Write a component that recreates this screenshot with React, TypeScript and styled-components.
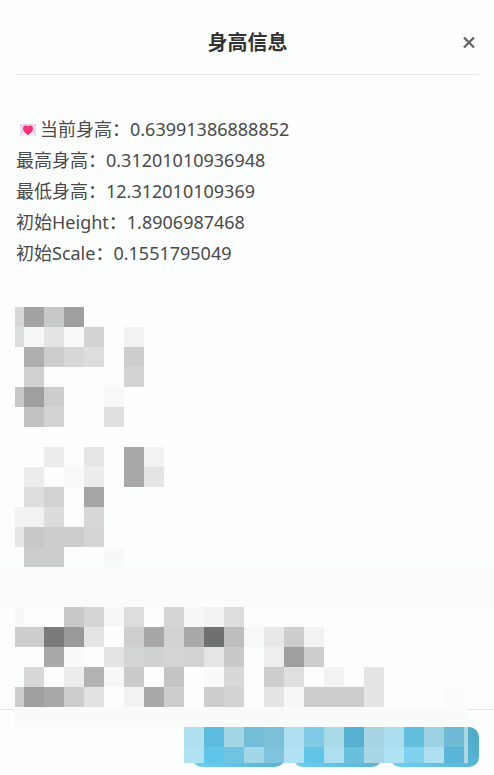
import { useState } from "react";
import styled, { createGlobalStyle } from "styled-components";

const info = [
  { label: "当前身高", value: "0.63991386888852", marked: true },
  { label: "最高身高", value: "0.31201010936948" },
  { label: "最低身高", value: "12.312010109369" },
  { label: "初始Height", value: "1.8906987468" },
  { label: "初始Scale", value: "0.1551795049" },
];

// one hex colour per cell, "-" leaves the cell empty
const upperBlocks = [
  "d7d7d7 a3a3a3 c7c9c8 9da09e",
  "dcdedd f6f8f7 e4e4e4 f8faf9 d2d4d3 - f1f3f2",
  "- adafae cccecd d8d7d8 dcdedd - cccecd",
  "- cfd1d0 - - - - d2d4d3",
  "c8cac9 9da09e cccecd - - f8faf9",
  "- c0c2c1 d2d4d3 - - dedfde",
  "-",
  "- - ebedec - e5e7e6 - a9a9a9 f1f3f2",
  "- ebedec - f8faf9 ebedec - a9a9a9 e3e5e4",
  "- dcdedd d1d3d2 - a5a7a6",
  "f1f3f2 f1f3f2 dbdddc - d8d7d8",
  "e5e7e6 c7c9c8 cccecd cccecd d4d6d5",
  "- cccecd cccecd - - f7f9f8",
];

const lowerBlocks = [
  "f6f8f7 - - c8cac9 d4d6d5 f6f8f7 dcdedd - d4d6d5 f6f8f7 f1f3f2 dcdedd",
  "cccecd cccecd 7a7a7a 979a98 e3e5e4 - d0cfd0 a7a7a7 d3d2d3 a9a9a9 6e716f bdbfbe f8faf9 e9e8e9 cccecd f1f3f2",
  "- - a9a9a9 f9fbfa - e3e5e4 d3d5d4 d0d2d1 d5d4d5 d3d3d3 e6e5e6 c8cac9 - eeeeee 9da09e cccecd",
  "- d9d8d9 - ebedec b2b4b3 f6f8f7 cccbcc - c4c6c5 - f9fbfa d9d8d9 - cccecd e0dfe0 - f1f3f2 - e3e5e4",
  "cccecd 9da09e a9a9a9 cccecd e1e3e2 - f1f3f2 a9a9a9 cccecd - cccecd d1d3d2 - e3e5e4 f6f8f7 cccecd cccecd cccecd e3e5e4 - - - fcfbfc",
];

const buttonBlocks = [
  "b0e0f0 5ebddf a3d7e6 74bdd6 7cc0d8 b0dff1 80cce7 a8dae8 56b0cf a6d4e2 acdeee 62bfdd 9dd2e4 6fbbd5 acd8e4",
  "b0e2f2 60c5e8 6fc4e3 a2d7e7 7fc3dc b0e2f4 62c5e8 addff0 69bfdc aad7e5 b0e2f3 80d1ee b0dff1 5ab6d9 acd8e4",
];

const Cells = ({ rows, size }: { rows: string[]; size: number }) => (
  <>
    {rows.flatMap((row, y) => {
      const cells = row.split(" ");
      return Array.from({ length: size }, (_, x) => {
        const color = cells[x];
        return (
          <Cell
            key={`${y}-${x}`}
            $color={color && color !== "-" ? `#${color}` : "transparent"}
          />
        );
      });
    })}
  </>
);

const LoveLetter = () => (
  <Letter viewBox="0 0 16 12" aria-hidden="true">
    <rect width="16" height="12" fill="#ead9f3" />
    <path d="M0 12L6 6h4l6 6z" fill="#f3e8f8" />
    <path d="M0 0l8 8 8-8z" fill="#e4cdef" />
    <path
      d="M8 11C5 8.700 3 7 3 4.400C3 2.600 4.200 1.400 5.700 1.400C6.700 1.400 7.600 1.900 8 2.700C8.400 1.900 9.300 1.400 10.300 1.400C11.800 1.400 13 2.600 13 4.400C13 7 11 8.700 8 11z"
      fill="#f4326f"
    />
  </Letter>
);

const App = () => {
  const [open, setOpen] = useState(true);

  return (
    <>
      <GlobalStyle />
      {open && (
        <Dialog role="dialog" aria-labelledby="height-title">
          <Header>
            <Title id="height-title">身高信息</Title>
            <CloseButton aria-label="关闭" onClick={() => setOpen(false)}>
              <CloseIcon viewBox="0 0 12 12" aria-hidden="true">
                <path d="M1 0.500l10 10M11 0.500L1 10.500" />
              </CloseIcon>
            </CloseButton>
          </Header>
          <Content>
            <InfoList>
              {info.map(({ label, value, marked }) => (
                <InfoRow key={label}>
                  {marked && <LoveLetter />}
                  {label}：{value}
                </InfoRow>
              ))}
            </InfoList>
            <TextMosaic aria-hidden="true">
              <Cells rows={upperBlocks} size={23} />
            </TextMosaic>
            <Band />
            <TextMosaic aria-hidden="true">
              <Cells rows={lowerBlocks} size={23} />
            </TextMosaic>
          </Content>
          <Footer>
            <ActionButton $wide aria-label="操作一" />
            <ActionButton aria-label="操作二" />
            <ActionButton aria-label="操作三" />
            <FooterCover aria-hidden="true">
              <Veil />
              <ButtonMosaic>
                <Cells rows={buttonBlocks} size={15} />
              </ButtonMosaic>
            </FooterCover>
          </Footer>
        </Dialog>
      )}
    </>
  );
};

export default App;

const GlobalStyle = createGlobalStyle`
  * {
    box-sizing: border-box;
  }
  body {
    margin: 0;
    background: #fcfefd;
    color: #4a4a4a;
    font-family: "Noto Sans", "Noto Sans CJK SC", sans-serif;
  }
`;

const Dialog = styled.section`
  display: flex;
  flex-direction: column;
  min-height: 100vh;
`;

const Header = styled.header`
  display: grid;
  grid-template-columns: 20px 1fr 20px;
  align-items: center;
  margin: 0 15px 0 16px;
  padding: 27px 0 16px;
  border-bottom: 1px solid #e7e9e8;
`;

const Title = styled.h1`
  grid-column: 2;
  margin: 0;
  font-size: 20px;
  font-weight: 700;
  line-height: 31px;
  text-align: center;
  color: #333;
`;

const CloseButton = styled.button`
  display: flex;
  align-items: center;
  justify-content: center;
  width: 20px;
  height: 20px;
  padding: 0;
  border: none;
  background: none;
  color: #666;
  cursor: pointer;
`;

const CloseIcon = styled.svg`
  width: 12px;
  height: 12px;
  fill: none;
  stroke: currentColor;
  stroke-width: 2.4;
`;

const Content = styled.main`
  flex: 1;
  padding-bottom: 2px;
`;

const InfoList = styled.ul`
  margin: 0;
  padding: 39px 16px 38px;
  list-style: none;
`;

const InfoRow = styled.li`
  display: flex;
  align-items: center;
  font-size: 18px;
  line-height: 31px;
`;

const Letter = styled.svg`
  width: 16px;
  height: 12px;
  margin: 0 4px;
`;

const Cell = styled.span<{ $color: string }>`
  background: ${({ $color }) => $color};
`;

const TextMosaic = styled.div`
  display: grid;
  grid-template-columns: 9px repeat(22, 20px);
  grid-auto-rows: 20px;
  margin-left: 15px;
`;

const Band = styled.div`
  height: 40px;
  background: #fcfbfc;
`;

const Footer = styled.footer`
  position: relative;
  display: flex;
  justify-content: flex-end;
  gap: 8px;
  padding: 17px 15px 8px;
  border-top: 1px solid #e7e9e8;
`;

const ActionButton = styled.button<{ $wide?: boolean }>`
  width: ${({ $wide }) => ($wide ? 93 : 89)}px;
  height: 40px;
  border: none;
  border-radius: 10px;
  background: linear-gradient(45deg, #6dcff6, #4fa8c5);
  cursor: pointer;
`;

// sits over the divider and the action buttons
const FooterCover = styled.div`
  position: absolute;
  top: -3px;
  left: 15px;
  right: 26px;
`;

const Veil = styled.div`
  height: 20px;
  background: #f9fbfa;
`;

const ButtonMosaic = styled.div`
  display: grid;
  grid-template-columns: repeat(14, 20px) 4px;
  grid-template-rows: 20px 16px;
  justify-content: end;
`;
